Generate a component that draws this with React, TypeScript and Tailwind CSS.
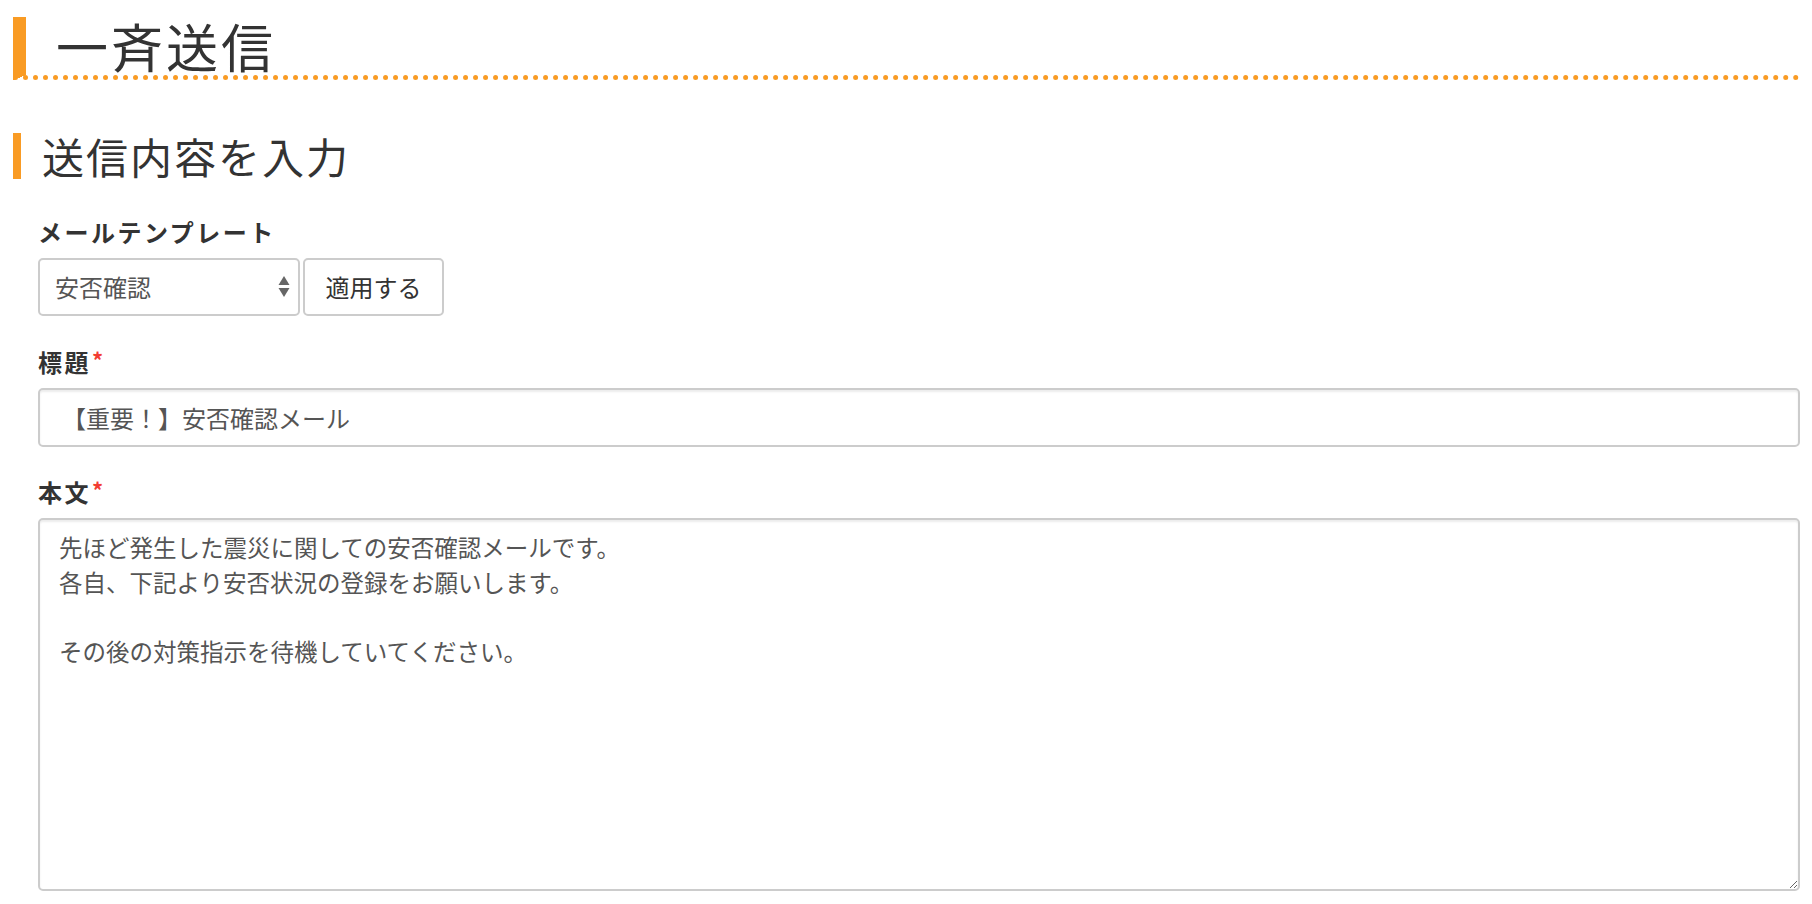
import React from "react";

const font = '"Noto Sans CJK JP", "Noto Sans", sans-serif';

function Label({ text, required }: { text: string; required?: boolean }) {
  return (
    <div className="mb-[9px] flex items-start text-[24px] font-bold leading-[35px] tracking-[2.5px] text-[#333]">
      <span>{text}</span>
      {required && <span className="ml-[1px] text-[22px] font-bold leading-[30px] tracking-normal text-[#f23c32]">*</span>}
    </div>
  );
}

export default function App() {
  return (
    <div className="min-h-[904px] w-full bg-white pl-[13px] pr-[12px]" style={{ fontFamily: font }}>
      <h1 className="mt-[17px] border-b-[5px] border-l-[13px] border-dotted border-[#f99b24] pl-[30px] text-[52px] font-normal leading-[58px] tracking-[3px] text-[#333] [border-left-style:solid]">
        一斉送信
      </h1>

      <h2 className="mt-[53px] border-l-[8px] border-solid border-[#f99b24] pl-[21px] text-[42px] font-normal leading-[46px] tracking-[2px] text-[#333]">
        送信内容を入力
      </h2>

      <div className="pl-[25px] pt-[35px]">
        <Label text="メールテンプレート" />
        <div className="flex gap-[3px]">
          <div className="flex h-[58px] w-[262px] items-center justify-between rounded-[5px] border-2 border-[#ccc] bg-white pl-[15px] pr-[8px] text-[24px] text-[#555]">
            <span>安否確認</span>
            <svg width="12" height="22" viewBox="0 0 12 22" className="text-[#666]">
              <path d="M6 0 L11.5 9 L0.5 9 Z" fill="currentColor" />
              <path d="M0.5 12 L11.5 12 L6 21 Z" fill="currentColor" />
            </svg>
          </div>
          <button className="h-[58px] w-[141px] rounded-[5px] border-2 border-[#ccc] bg-white text-[24px] text-[#333]">
            適用する
          </button>
        </div>

        <div className="mt-[28px]">
          <Label text="標題" required />
          <div className="flex h-[59px] items-center rounded-[5px] border-2 border-[#ccc] bg-white px-[22px] text-[24px] text-[#555] shadow-[inset_0_2px_2px_rgba(0,0,0,0.075)]">
            【重要！】安否確認メール
          </div>
        </div>

        <div className="mt-[27px]">
          <Label text="本文" required />
          <textarea
            className="block h-[373px] w-full resize-y rounded-[5px] border-2 border-[#ccc] bg-white px-[19px] py-[10px] text-[23.5px] leading-[34.6px] text-[#555] shadow-[inset_0_2px_2px_rgba(0,0,0,0.075)] outline-none"
            style={{ fontFamily: font }}
            defaultValue={"先ほど発生した震災に関しての安否確認メールです。\n各自、下記より安否状況の登録をお願いします。\n\nその後の対策指示を待機していてください。"}
          />
        </div>
      </div>
    </div>
  );
}
